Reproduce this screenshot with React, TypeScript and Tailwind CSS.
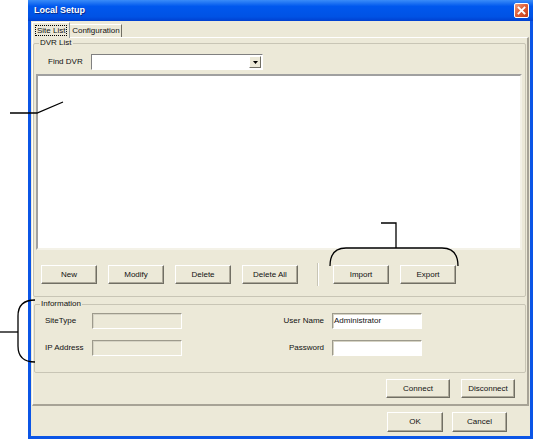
import React from 'react';

// Classic raised push button used throughout the dialog
const Btn: React.FC<{ label: string; w: string }> = ({ label, w }) => (
  <button
    type="button"
    className={`${w} h-full flex items-center justify-center bg-[#ECE9D8] border border-t-white border-l-white border-b-[#716F64] border-r-[#716F64] shadow-[inset_-1px_-1px_0_#ACA899]`}
  >
    {label}
  </button>
);

// Sunken edit field
const Field: React.FC<{ value?: string; disabled?: boolean }> = ({ value, disabled }) => (
  <div
    className={`w-[90px] h-[16px] flex items-center pl-[1px] border border-t-[#9D9A8C] border-l-[#9D9A8C] border-b-white border-r-white shadow-[inset_1px_1px_0_#D6D3C4] ${
      disabled ? 'bg-[#ECE9D8]' : 'bg-white'
    }`}
  >
    {value}
  </div>
);

const App: React.FC = () => {
  return (
    <div className="relative w-[533px] h-[439px] bg-white overflow-hidden font-['Liberation_Sans',Arial,sans-serif] text-[8px] leading-[10px] text-[#111]">
      <div className="ml-[28px] w-[505px] h-[439px] flex flex-col">
        {/* title bar */}
        <div className="h-[21px] shrink-0 flex items-center justify-between pl-[6px] pr-[4px] bg-[linear-gradient(to_bottom,#3a8cf8,#0058ee_30%,#0052e4_80%,#0040d0)]">
          <span className="text-white font-bold text-[9px] leading-[11px] [text-shadow:1px_1px_0_#0a2a8a]">Local Setup</span>
          <div className="w-[15px] h-[15px] rounded-[2px] border border-white flex items-center justify-center bg-[linear-gradient(to_bottom_right,#f0a080,#e0603a_45%,#c23c18)]">
            <svg width="9" height="9" viewBox="0 0 9 9">
              <path d="M1.5 1.5 L7.5 7.5 M7.5 1.5 L1.5 7.5" stroke="white" strokeWidth="1.8" strokeLinecap="square" />
            </svg>
          </div>
        </div>

        {/* body */}
        <div className="flex-1 flex flex-col bg-[#ECE9D8] border-x-[3px] border-b-[3px] border-[#0b55e6]">
          {/* tabs */}
          <div className="h-[15px] mt-[1px] pl-[1px] flex items-start">
            <div className="relative z-10 h-[16px] px-[2px] flex items-center bg-[#ECE9D8] border-t border-l border-white border-r border-r-[#919B9C]">
              <span className="px-[1px] border border-dotted border-black leading-[9px]">Site List</span>
            </div>
            <div className="mt-[2px] h-[13px] w-[52px] flex items-center justify-center border-t border-white border-r border-r-[#716F64]">
              Configuration
            </div>
          </div>

          {/* tab panel */}
          <div className="mx-[1px] h-[369px] flex flex-col border-t border-l border-white border-r-2 border-b-2 border-r-[#A7A396] border-b-[#A7A396]">
            <fieldset className="h-[259px] mr-[1px] border border-[#C8C5B5] rounded-[2px] flex flex-col">
              <legend className="ml-[5px] px-[1px]">DVR List</legend>
              <div className="mt-[6px] flex items-center">
                <span className="ml-[14px] w-[43px]">Find DVR</span>
                <div className="w-[172px] h-[16px] flex items-center justify-end pr-[1px] bg-white border border-t-[#808080] border-l-[#808080] border-b-white border-r-white">
                  <div className="w-[12px] h-[12px] flex items-center justify-center bg-[#ECE9D8] border border-t-white border-l-white border-b-[#716F64] border-r-[#716F64]">
                    <svg width="5" height="3" viewBox="0 0 5 3">
                      <path d="M0 0 H5 L2.5 3 Z" fill="black" />
                    </svg>
                  </div>
                </div>
              </div>
              <div className="mt-[4px] ml-[2px] mr-[3px] h-[176px] bg-white border-2 border-t-[#A0A0A0] border-l-[#A0A0A0] border-b-[#F4F2E8] border-r-[#F4F2E8]" />
              <div className="mt-[15px] h-[19px] pl-[7px] flex items-center gap-[11px]">
                <Btn label="New" w="w-[56px]" />
                <Btn label="Modify" w="w-[56px]" />
                <Btn label="Delete" w="w-[56px]" />
                <Btn label="Delete All" w="w-[56px]" />
                <div className="ml-[8px] mr-[3px] w-[2px] h-[23px] border-l border-[#C8C5B5] border-r border-r-white" />
                <Btn label="Import" w="w-[56px]" />
                <Btn label="Export" w="w-[56px]" />
              </div>
            </fieldset>

            <fieldset className="mt-[2px] ml-[1px] mr-[1px] h-[74px] border border-[#C8C5B5] rounded-[2px] flex flex-col">
              <legend className="ml-[5px] px-[1px]">Information</legend>
              <div className="mt-[4px] pl-[10px] flex flex-col gap-[11px]">
                <div className="flex items-center">
                  <span className="w-[47px]">SiteType</span>
                  <Field disabled />
                  <span className="ml-[98px] w-[44px] text-right">User Name</span>
                  <div className="ml-[8px]">
                    <Field value="Administrator" />
                  </div>
                </div>
                <div className="flex items-center">
                  <span className="w-[47px]">IP Address</span>
                  <Field disabled />
                  <span className="ml-[98px] w-[44px] text-right">Password</span>
                  <div className="ml-[8px]">
                    <Field />
                  </div>
                </div>
              </div>
            </fieldset>

            <div className="mt-[6px] h-[19px] pr-[12px] flex justify-end gap-[11px]">
              <Btn label="Connect" w="w-[64px]" />
              <Btn label="Disconnect" w="w-[54px]" />
            </div>
          </div>

          <div className="mt-[6px] h-[20px] pr-[23px] flex justify-end gap-[9px]">
            <Btn label="OK" w="w-[56px]" />
            <Btn label="Cancel" w="w-[55px]" />
          </div>
        </div>
      </div>

      {/* annotation callout lines */}
      <svg className="absolute inset-0 pointer-events-none" width="533" height="439" viewBox="0 0 533 439">
        <g fill="none" stroke="black" strokeWidth="1.3">
          <path d="M10 113 H37 L63 102" />
          <path d="M330 266 Q330 248 346 248 H442 Q458 248 458 266" />
          <path d="M396 248 V223 H381" />
          <path d="M35 300 Q18 300 18 316 V346 Q18 362 35 362" />
          <path d="M0 332 H18" />
        </g>
      </svg>
    </div>
  );
};

export default App;
